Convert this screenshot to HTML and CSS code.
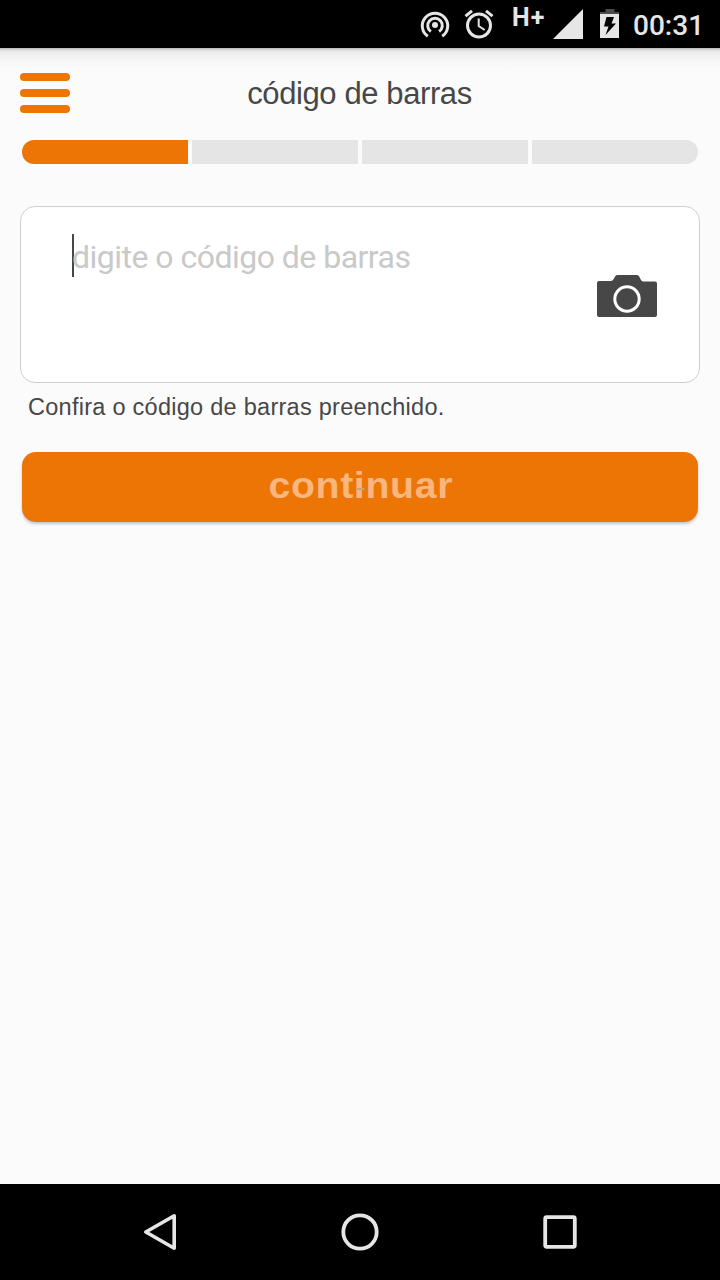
FILE: index.html
```html
<!DOCTYPE html>
<html lang="pt-BR">
<head>
    <meta charset="UTF-8">
    <meta name="viewport" content="width=device-width, initial-scale=1.0">
    <title>código de barras</title>
    <link rel="stylesheet" href="styles.css">
</head>
<body>
    <div class="screen">
        <!-- Status bar -->
        <div class="status-bar">
            <svg class="icon-hotspot" width="30" height="30" viewBox="0 0 30 30" fill="none" stroke="#e6e6e6" stroke-width="3">
                <circle cx="15" cy="16" r="3" fill="#e6e6e6" stroke="none"/>
                <path d="M10.9 22.6A7.3 7.3 0 1 1 19.1 22.6"/>
                <path d="M7.8 27.3A12.7 12.7 0 1 1 22.2 27.3"/>
            </svg>
            <svg class="icon-alarm" width="30" height="30" viewBox="0 0 30 30" fill="none" stroke="#e6e6e6" stroke-width="3">
                <circle cx="15" cy="16.5" r="11.5"/>
                <path d="M14.7 9.5v7.5l6 4" stroke-width="2"/>
                <path d="M1.5 7.2L8 1.8M22 1.8l6.500 5.400"/>
            </svg>
            <span class="network">H+</span>
            <svg class="icon-signal" width="30" height="30" viewBox="0 0 30 30">
                <path d="M30 0v30H0z" fill="#e6e6e6"/>
            </svg>
            <svg class="icon-battery" width="20" height="30" viewBox="0 0 20 30">
                <path d="M5.5 0h9v3H19v2.5H0V3h5.5z" fill="#4d4d4d"/>
                <path d="M0 5h19v24H0z" fill="#e6e6e6"/>
                <path d="M6.5 8H14l-2.5 6.5H16L5.5 26l3-8.5H4z" fill="#000"/>
            </svg>
            <span class="clock">00:31</span>
        </div>

        <!-- Header -->
        <div class="header">
            <button class="menu-button" aria-label="menu">
                <span></span>
                <span></span>
                <span></span>
            </button>
            <h1>código de barras</h1>
        </div>

        <div class="steps">
            <div class="step active"></div>
            <div class="step"></div>
            <div class="step"></div>
            <div class="step"></div>
        </div>

        <div class="code-box">
            <div class="code-input"><span class="cursor"></span><span class="placeholder">digite o código de barras</span></div>
            <svg class="icon-camera" width="60" height="42" viewBox="0 0 60 42">
                <path d="M2 6h12c1.5 0 2-1 3-2.5C18.3 1.2 18.500 0 20.5 0h19c2 0 2.5 1.2 3.5 3C44 5 44.5 6.5 46.5 6.5H58q2 0 2 2V40q0 2-2 2H2q-2 0-2-2V8q0-2 2-2z" fill="#474747"/>
                <circle cx="30" cy="24" r="12.2" fill="none" stroke="#fff" stroke-width="3"/>
            </svg>
        </div>
        <p class="hint">Confira o código de barras preenchido.</p>

        <button class="continue-button"><span>continuar</span></button>

        <!-- Navigation bar -->
        <div class="nav-bar">
            <svg width="40" height="40" viewBox="0 0 40 40" fill="none" stroke="#e6e6e6" stroke-width="3.6" stroke-linejoin="round">
                <path d="M34.2 3.8v32.4L5.8 20z"/>
            </svg>
            <svg width="40" height="40" viewBox="0 0 40 40" fill="none" stroke="#e6e6e6" stroke-width="3.8">
                <circle cx="20" cy="20" r="16.7"/>
            </svg>
            <svg width="40" height="40" viewBox="0 0 40 40" fill="none" stroke="#e6e6e6" stroke-width="3.8">
                <rect x="5.2" y="5.2" width="29.6" height="29.6" rx="1.5"/>
            </svg>
        </div>
    </div>
</body>
</html>
```
FILE: styles.css
```css
* {
    box-sizing: border-box;
}

body {
    margin: 0;
    font-family: "Liberation Sans", Arial, sans-serif;
    background-color: #fbfbfb;
    color: #474747;
}

.screen {
    display: flex;
    flex-direction: column;
    width: 720px;
    height: 1280px;
    overflow: hidden;
}

svg {
    display: block;
    flex: none;
}

button {
    border: none;
    padding: 0;
    cursor: pointer;
}

/* status bar */
.status-bar {
    display: flex;
    flex: none;
    align-items: flex-start;
    height: 48px;
    padding: 9px 0 0 420px;
    background-color: #000;
    color: #e6e6e6;
}

.icon-alarm {
    margin-left: 14px;
}

.network {
    width: 42px;
    margin: -4px 0 0 17px;
    padding-left: 1px;
    font-family: Roboto, sans-serif;
    font-size: 25px;
    font-weight: 700;
    line-height: 25px;
    letter-spacing: 1px;
}

.icon-battery {
    margin-left: 17px;
}

.clock {
    margin-left: 13px;
    font-family: Roboto, sans-serif;
    font-size: 28px;
    font-weight: 500;
    line-height: 33px;
}

/* header */
.header {
    display: grid;
    grid-template-columns: 50px 1fr 50px;
    flex: none;
    align-items: center;
    height: 92px;
    padding: 0 21px 2px 20px;
    background: linear-gradient(#b5b5b5 0, #dedede 2px, #ededed 4px, #f5f5f5 11px, #fbfbfb 20px);
}

.menu-button {
    display: flex;
    flex-direction: column;
    gap: 8px;
    background: none;
}

.menu-button span {
    width: 50px;
    height: 8px;
    border-radius: 4px;
    background-color: #ed7505;
}

.header h1 {
    margin: 0;
    padding-top: 2px;
    font-size: 31px;
    font-weight: 400;
    line-height: 40px;
    letter-spacing: -0.4px;
    text-align: center;
}

/* progress */
.steps {
    display: grid;
    grid-template-columns: repeat(4, 1fr);
    flex: none;
    gap: 4px;
    height: 24px;
    margin: 0 22px;
    border-radius: 12px;
    overflow: hidden;
}

.step {
    background-color: #e5e5e5;
}

.step.active {
    background-color: #ed7505;
}

/* form */
.code-box {
    display: flex;
    flex: none;
    justify-content: space-between;
    height: 177px;
    margin: 42px 20px 0;
    padding: 27px 42px 0 51px;
    border: 1px solid #cfcfcf;
    border-radius: 15px;
    background-color: #fff;
}

.code-input {
    display: flex;
    height: 43px;
    font-family: Roboto, sans-serif;
    font-size: 32px;
    line-height: 46px;
    letter-spacing: -0.52px;
    color: #c9c9c9;
}

.cursor {
    width: 2px;
    height: 43px;
    margin-right: -2px;
    background-color: #474747;
}

.icon-camera {
    margin-top: 41px;
}

.hint {
    flex: none;
    height: 69px;
    margin: 0;
    padding: 10px 28px 0;
    font-size: 23.5px;
    line-height: 28px;
    letter-spacing: 0.27px;
}

.continue-button {
    flex: none;
    height: 70px;
    margin: 0 22px;
    border-radius: 14px;
    background-color: #ed7505;
    box-shadow: 0 2px 3px rgba(0, 0, 0, 0.22);
    font-family: "Liberation Sans", Arial, sans-serif;
    font-size: 36px;
    font-weight: 700;
    line-height: 66px;
    color: #f9b67d;
}

.continue-button span {
    display: inline-block;
    position: relative;
    padding: 0 0 2px 1px;
    letter-spacing: 0.6px;
    transform: scaleX(1.09);
}

/* small mark over the middle of the label */
.continue-button span::after {
    content: "";
    position: absolute;
    left: 50%;
    top: 35px;
    width: 7px;
    height: 2px;
    margin-left: -3px;
    background-color: #c5a37e;
}

/* navigation bar */
.nav-bar {
    display: flex;
    flex: none;
    justify-content: space-between;
    align-items: center;
    height: 96px;
    margin-top: auto;
    padding: 0 140px;
    background-color: #000;
}
```
